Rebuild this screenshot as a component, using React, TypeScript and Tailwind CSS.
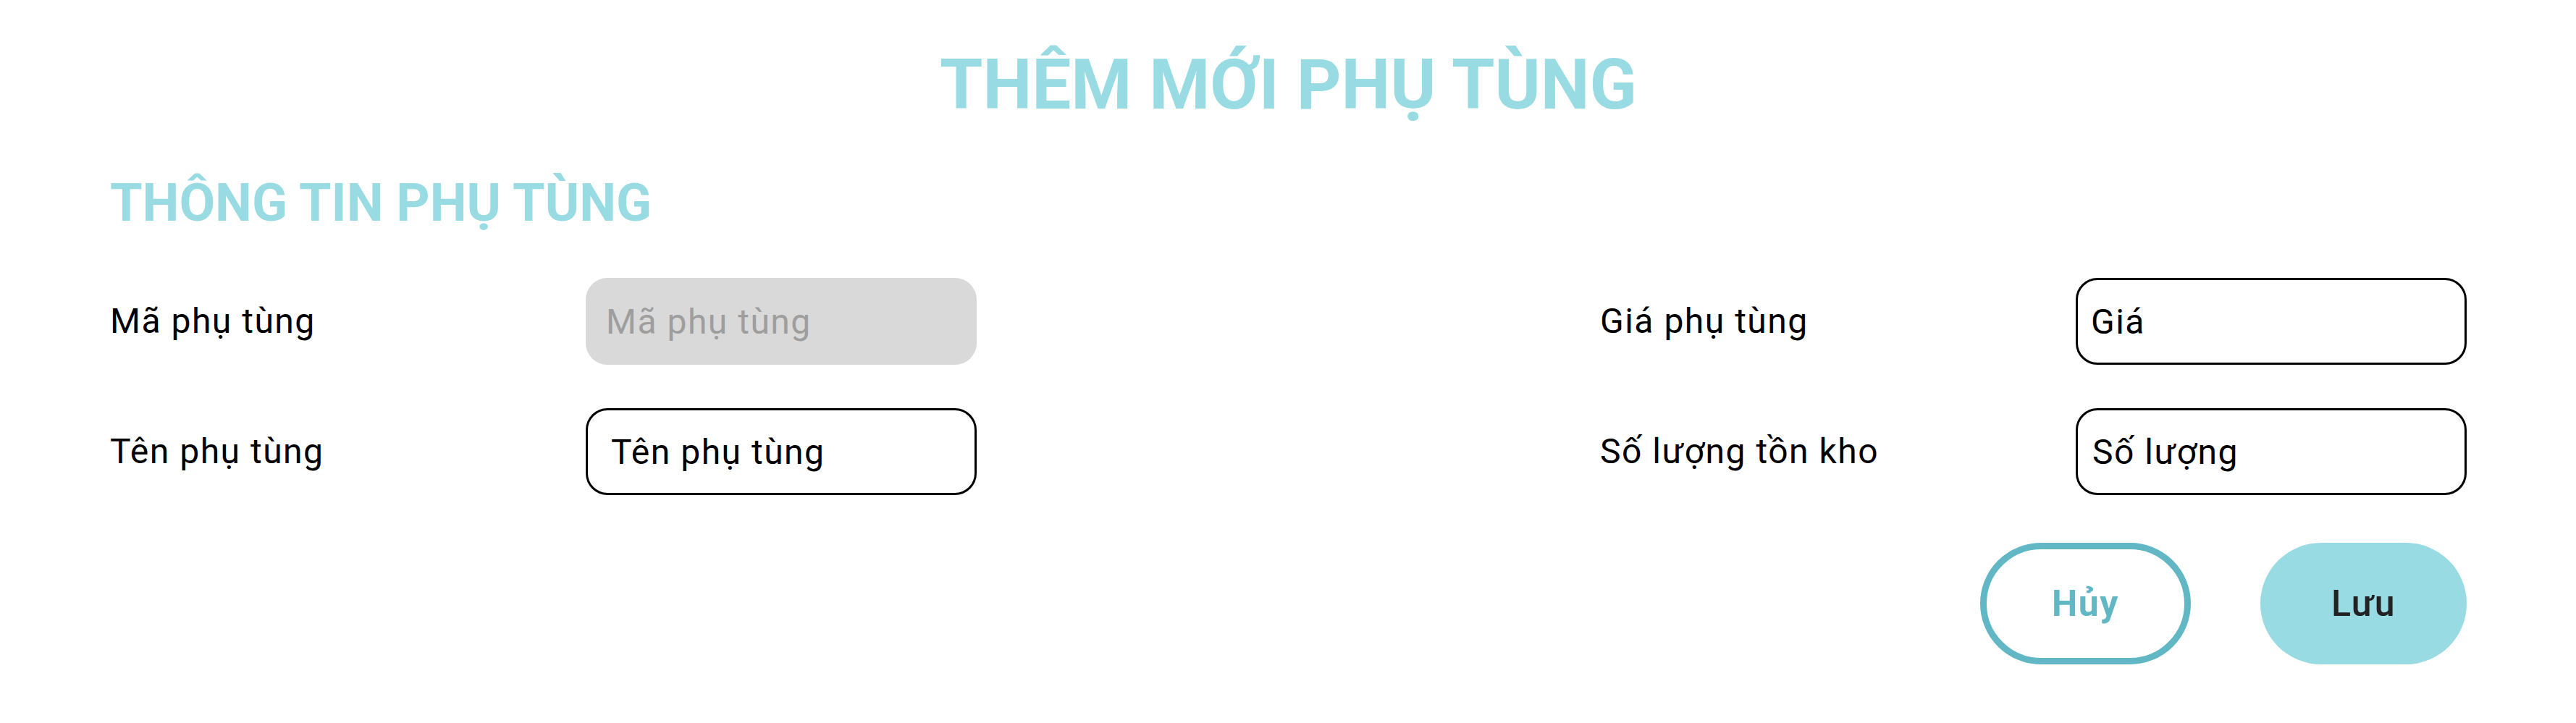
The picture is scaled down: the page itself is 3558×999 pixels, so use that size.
export default function App() {
  return (
    <div className="min-h-screen bg-white pl-[152px] pr-[151px] font-['Roboto',sans-serif]">
      <h1 className="pt-[69px] text-center text-[96px] font-bold leading-none text-[#99dbe3]">
        THÊM MỚI PHỤ TÙNG
      </h1>

      <h2 className="mt-[80px] text-[72px] font-bold leading-none text-[#99dbe3]">
        THÔNG TIN PHỤ TÙNG
      </h2>

      <div className="mt-[67px] flex justify-between">
        {/* Left column */}
        <div className="flex w-[1197px] flex-col gap-[60px]">
          <div className="flex h-[120px] items-center justify-between">
            <label className="text-[48px] tracking-[1.5px] text-black">Mã phụ tùng</label>
            <input
              disabled
              placeholder="Mã phụ tùng"
              className="h-[120px] w-[540px] rounded-[30px] bg-[#d9d9d9] px-[28px] text-[48px] tracking-[1.5px] outline-none placeholder:text-[#9e9e9e]"
            />
          </div>
          <div className="flex h-[120px] items-center justify-between">
            <label className="text-[48px] tracking-[1.5px] text-black">Tên phụ tùng</label>
            <input
              placeholder="Tên phụ tùng"
              className="h-[120px] w-[540px] rounded-[30px] border-[3px] border-black px-[32px] text-[48px] tracking-[1.5px] outline-none placeholder:text-black"
            />
          </div>
        </div>

        {/* Right column */}
        <div className="flex w-[1197px] flex-col gap-[60px]">
          <div className="flex h-[120px] items-center justify-between">
            <label className="text-[48px] tracking-[1.5px] text-black">Giá phụ tùng</label>
            <input
              placeholder="Giá"
              className="h-[120px] w-[540px] rounded-[30px] border-[3px] border-black px-[18px] text-[48px] tracking-[1.5px] outline-none placeholder:text-black"
            />
          </div>
          <div className="flex h-[120px] items-center justify-between">
            <label className="text-[48px] tracking-[1.5px] text-black">Số lượng tồn kho</label>
            <input
              placeholder="Số lượng"
              className="h-[120px] w-[540px] rounded-[30px] border-[3px] border-black px-[20px] text-[48px] tracking-[1.5px] outline-none placeholder:text-black"
            />
          </div>
        </div>
      </div>

      <div className="mt-[66px] flex justify-end gap-[96px]">
        <button className="flex h-[168px] w-[291px] items-center justify-center rounded-full border-[9px] border-[#62b7c4] bg-white text-[50px] font-bold tracking-[1.5px] text-[#62b7c4]">
          Hủy
        </button>
        <button className="flex h-[168px] w-[285px] items-center justify-center rounded-full bg-[#99dbe3] text-[50px] font-medium tracking-[1.5px] text-[#222222]">
          Lưu
        </button>
      </div>
    </div>
  );
}
